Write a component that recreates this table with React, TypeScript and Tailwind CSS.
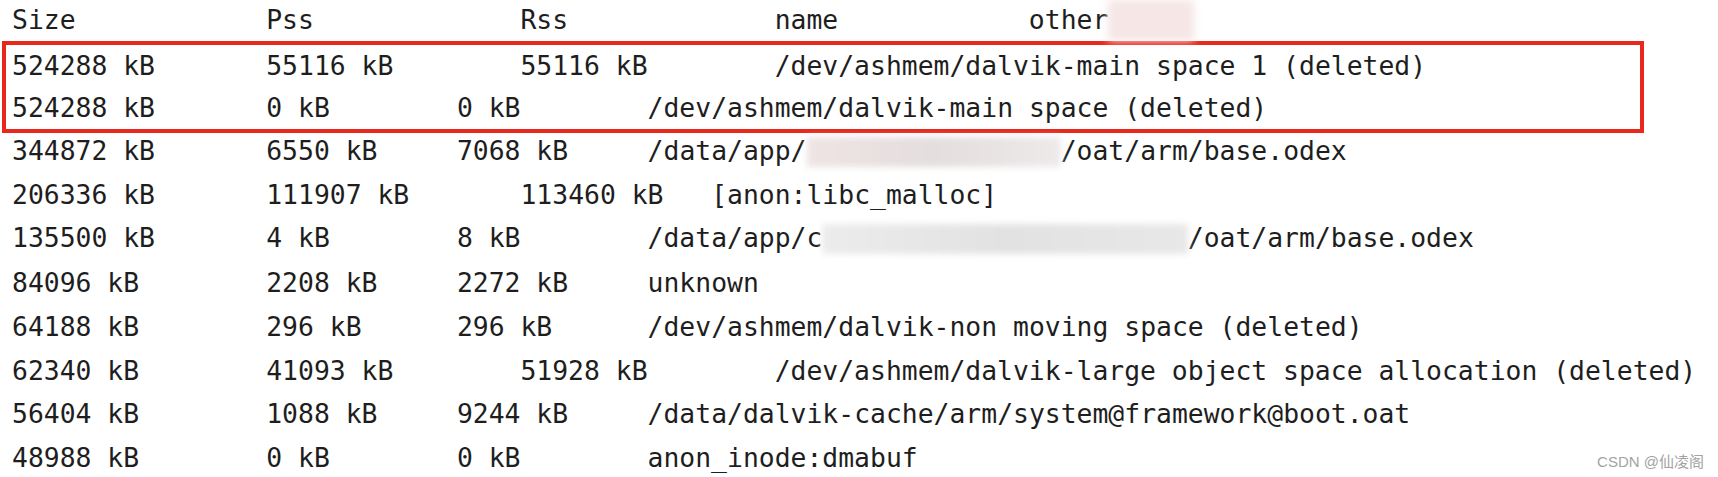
import React from 'react'

type Seg = { at: number; text?: string; blur?: string; span?: number }

const boxed: Seg[][] = [
  [
    { at: 0, text: '524288 kB' },
    { at: 16, text: '55116 kB' },
    { at: 32, text: '55116 kB' },
    { at: 48, text: '/dev/ashmem/dalvik-main space 1 (deleted)' },
  ],
  [
    { at: 0, text: '524288 kB' },
    { at: 16, text: '0 kB' },
    { at: 28, text: '0 kB' },
    { at: 40, text: '/dev/ashmem/dalvik-main space (deleted)' },
  ],
]

const rest: Seg[][] = [
  [
    { at: 0, text: '344872 kB' },
    { at: 16, text: '6550 kB' },
    { at: 28, text: '7068 kB' },
    { at: 40, text: '/data/app/' },
    { at: 50, span: 16, blur: 'w-[16ch] bg-gradient-to-r from-[#efe4e4] via-[#e4dede] to-[#eeeaea]' },
    { at: 66, text: '/oat/arm/base.odex' },
  ],
  [
    { at: 0, text: '206336 kB' },
    { at: 16, text: '111907 kB' },
    { at: 32, text: '113460 kB' },
    { at: 44, text: '[anon:libc_malloc]' },
  ],
  [
    { at: 0, text: '135500 kB' },
    { at: 16, text: '4 kB' },
    { at: 28, text: '8 kB' },
    { at: 40, text: '/data/app/c' },
    { at: 51, span: 23, blur: 'w-[23ch] bg-gradient-to-r from-[#ececec] via-[#e2e2e2] to-[#e8e8e8]' },
    { at: 74, text: '/oat/arm/base.odex' },
  ],
  [
    { at: 0, text: '84096 kB' },
    { at: 16, text: '2208 kB' },
    { at: 28, text: '2272 kB' },
    { at: 40, text: 'unknown' },
  ],
  [
    { at: 0, text: '64188 kB' },
    { at: 16, text: '296 kB' },
    { at: 28, text: '296 kB' },
    { at: 40, text: '/dev/ashmem/dalvik-non moving space (deleted)' },
  ],
  [
    { at: 0, text: '62340 kB' },
    { at: 16, text: '41093 kB' },
    { at: 32, text: '51928 kB' },
    { at: 48, text: '/dev/ashmem/dalvik-large object space allocation (deleted)' },
  ],
  [
    { at: 0, text: '56404 kB' },
    { at: 16, text: '1088 kB' },
    { at: 28, text: '9244 kB' },
    { at: 40, text: '/data/dalvik-cache/arm/system@framework@boot.oat' },
  ],
  [
    { at: 0, text: '48988 kB' },
    { at: 16, text: '0 kB' },
    { at: 28, text: '0 kB' },
    { at: 40, text: 'anon_inode:dmabuf' },
  ],
]

function Line({ segs, className }: { segs: Seg[]; className: string }) {
  let pos = 0
  const out: React.ReactNode[] = []
  segs.forEach((s, i) => {
    if (s.at > pos) out.push(' '.repeat(s.at - pos))
    pos = s.at
    if (s.text) {
      out.push(s.text)
      pos += s.text.length
    } else if (s.blur) {
      // redacted part of the path
      out.push(<span key={i} className={`inline-block h-[30px] align-middle blur-[3px] ${s.blur}`} />)
      pos += s.span ?? 0
    }
  })
  return (
    <div className={`flex items-center whitespace-pre ${className}`}>
      <span>{out}</span>
    </div>
  )
}

export default function App() {
  return (
    <div
      className="relative w-[1718px] h-[477px] overflow-hidden bg-white text-[#1e1e1e] text-[26.4px] leading-none"
      style={{ fontFamily: '"DejaVu Sans Mono", "Liberation Mono", monospace' }}
    >
      <div className="flex flex-col">
        {/* Header */}
        <div className="h-[41px] pl-[12px] flex items-center whitespace-pre">
          <span>{'Size            Pss             Rss             name            other'}</span>
          <span className="inline-block w-[86px] h-[41px] bg-[#f6e6e6] blur-[4px]" />
        </div>

        {/* Highlighted rows */}
        <div className="ml-[2px] w-[1642px] border-[4px] border-[#e8281c] pl-[6px]">
          {boxed.map((segs, i) => (
            <Line key={i} segs={segs} className="h-[42px]" />
          ))}
        </div>

        <div className="-mt-[3px] pl-[12px]">
          {rest.map((segs, i) => (
            <Line key={i} segs={segs} className="h-[43.8px]" />
          ))}
        </div>
      </div>

      <div
        className="absolute right-[14px] bottom-[8px] text-[15px] text-[#a3a3a3]"
        style={{ fontFamily: '"Liberation Sans", "Noto Sans CJK SC", sans-serif' }}
      >
        CSDN @仙凌阁
      </div>
    </div>
  )
}
